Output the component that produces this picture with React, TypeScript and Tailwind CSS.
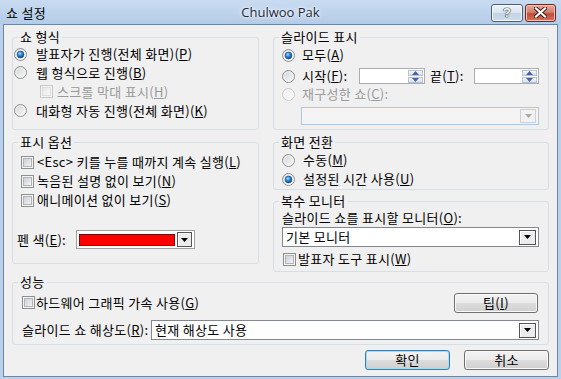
import React, { useId } from "react";

const Radio = ({ checked = false, disabled = false }: { checked?: boolean; disabled?: boolean }) => {
  const id = useId().replace(/:/g, "");
  return (
    <svg width="13" height="13" viewBox="0 0 13 13" className="shrink-0">
      <defs>
        <linearGradient id={`rf${id}`} x1="0" y1="0" x2="1" y2="1">
          <stop offset="0" stopColor={disabled ? "#ebebeb" : "#cfd1d3"} />
          <stop offset="1" stopColor={disabled ? "#fbfbfb" : "#fbfbfb"} />
        </linearGradient>
        <radialGradient id={`rd${id}`} cx="0.4" cy="0.35" r="0.7">
          <stop offset="0" stopColor="#a4e4ff" />
          <stop offset="0.45" stopColor="#2e8ad6" />
          <stop offset="1" stopColor="#0d3a80" />
        </radialGradient>
      </defs>
      <circle cx="6.5" cy="6.5" r="6" fill={`url(#rf${id})`} stroke={disabled ? "#cacaca" : "#8e8f8f"} />
      <circle cx="6.5" cy="6.5" r="4.6" fill="none" stroke="#ffffff" strokeOpacity="0.55" />
      {checked && <circle cx="6.5" cy="6.5" r="3.4" fill={`url(#rd${id})`} stroke="#1b4782" strokeWidth="0.6" />}
    </svg>
  );
};

const Check = ({ disabled = false }: { disabled?: boolean }) => {
  const id = useId().replace(/:/g, "");
  return (
    <svg width="13" height="13" viewBox="0 0 13 13" className="shrink-0">
      <defs>
        <linearGradient id={`cf${id}`} x1="0" y1="0" x2="1" y2="1">
          <stop offset="0" stopColor={disabled ? "#e6e6e6" : "#c9cdd2"} />
          <stop offset="1" stopColor={disabled ? "#fafafa" : "#f6f6f6"} />
        </linearGradient>
      </defs>
      <rect x="0.5" y="0.5" width="12" height="12" fill="#f4f4f4" stroke={disabled ? "#c8c8c8" : "#8e8f8f"} />
      <rect x="2.5" y="2.5" width="8" height="8" fill={`url(#cf${id})`} stroke={disabled ? "#dedede" : "#b1b5ba"} />
    </svg>
  );
};

const Arrow = ({ disabled = false }: { disabled?: boolean }) => (
  <svg width="7" height="4" viewBox="0 0 7 4">
    <path d="M0 0h7L3.5 4z" fill={disabled ? "#a9a9a9" : "#000"} />
  </svg>
);

const DropBtn = ({ disabled = false, cls = "w-[17px] h-[15px]" }: { disabled?: boolean; cls?: string }) => (
  <div
    className={`${cls} shrink-0 border flex items-center justify-center ${
      disabled ? "border-[#c6d2de] bg-[#f1f1f1]" : "border-[#555] bg-[#ececec] shadow-[inset_1px_1px_0_#fff]"
    }`}
  >
    <Arrow disabled={disabled} />
  </div>
);

const Spin = ({ cls }: { cls: string }) => (
  <div className={`${cls} h-[16px] border border-[#abadb3] bg-white flex justify-end p-[1px]`}>
    <div className="w-[15px] flex flex-col gap-[1px]">
      {["M0 4L3.5 0L7 4z", "M0 0h7L3.5 4z"].map((d) => (
        <div
          key={d}
          className="flex-1 border border-[#b7c3d3] bg-[linear-gradient(#f5f7fa,#d9e1ea)] flex items-center justify-center"
        >
          <svg width="7" height="4" viewBox="0 0 7 4">
            <path d={d} fill="#4a62a0" />
          </svg>
        </div>
      ))}
    </div>
  </div>
);

const Combo = ({ text, cls }: { text: string; cls: string }) => (
  <div className={`${cls} h-[20px] border border-[#828790] bg-white flex items-center pl-[3px] pr-[2px]`}>
    <span className="flex-1">{text}</span>
    <DropBtn />
  </div>
);

const Btn = ({ children, cls, def = false }: { children: React.ReactNode; cls: string; def?: boolean }) => (
  <div
    className={`${cls} h-[20px] rounded-[3px] border flex items-center justify-center bg-[linear-gradient(#f2f2f2_0%,#ebebeb_50%,#dddddd_50%,#cfcfcf_100%)] ${
      def ? "border-[#3c7fb1] shadow-[inset_0_0_0_1px_#9fdcfa]" : "border-[#707070] shadow-[inset_0_0_0_1px_#fafafa]"
    }`}
  >
    {children}
  </div>
);

const Box = ({ title, cls, children }: { title: string; cls: string; children: React.ReactNode }) => (
  <fieldset className={`${cls} border border-[#d5dfe5] rounded-[3px] min-w-0`}>
    <legend className="ml-[5px] px-[2px] leading-[14px]">{title}</legend>
    {children}
  </fieldset>
);

export default function App() {
  return (
    <div className="w-[561px] h-[379px] flex flex-col px-[3px] pb-[2px] bg-[#b9d1ea] font-['Noto_Sans_CJK_KR',sans-serif] text-[13px] tracking-[0.3px] leading-[14px] text-black">
      {/* title bar */}
      <div className="-mx-[3px] h-[24px] grid grid-cols-[1fr_auto_1fr] items-center bg-[linear-gradient(#c8dbf1,#b4cbe7)]">
        <span className="pl-[6px] text-[13px] leading-[16px] pt-[2px]">쇼 설정</span>
        <span className="font-['Open_Sans',sans-serif] text-[13px] tracking-normal leading-[16px] text-[#1e2a3a] [text-shadow:0_0_6px_#fff,0_0_3px_#fff]">
          Chulwoo Pak
        </span>
        <div className="flex justify-end gap-[2px] pr-[5px] pt-[1px]">
          <div className="w-[32px] h-[18px] rounded-[3px] border border-[#4e5e74] bg-[linear-gradient(#eef3f9_0%,#d9e4f1_50%,#c2d3e8_50%,#cfdcec_100%)] shadow-[inset_0_0_0_1px_#f4f8fc] flex items-center justify-center">
            <span className="font-['Liberation_Sans',sans-serif] text-[13px] font-bold leading-[14px] text-[#fff] [text-shadow:0_0_1px_#233,0_0_1px_#233,0_0_1px_#233]">
              ?
            </span>
          </div>
          <div className="w-[31px] h-[18px] rounded-[3px] border border-[#6b2a20] bg-[linear-gradient(#e9a99b_0%,#d47f6e_45%,#c24a36_55%,#d2735e_100%)] shadow-[inset_0_0_0_1px_#eec3b8] flex items-center justify-center">
            <svg width="13" height="11" viewBox="0 0 13 11">
              <path d="M2 1.5L11 9.5M11 1.5L2 9.5" stroke="#3c1a14" strokeWidth="4" strokeLinecap="square" />
              <path d="M2 1.5L11 9.5M11 1.5L2 9.5" stroke="#fff" strokeWidth="2.2" strokeLinecap="square" />
            </svg>
          </div>
        </div>
      </div>

      {/* client area */}
      <div className="flex-1 border border-[#6f86a3] bg-[#f0f0f0] px-[8px] pt-[5px] flex flex-col">
        {/* row 1 */}
        <div className="flex gap-[14px]">
          <Box title="쇼 형식" cls="w-[247px] h-[100px]">
            <div className="pt-[1px] pl-[1px] flex flex-col">
              <div className="h-[18px] flex items-center gap-[9px]">
                <Radio checked />
                <span>발표자가 진행(전체 화면)(<u>P</u>)</span>
              </div>
              <div className="h-[19px] flex items-center gap-[9px]">
                <Radio />
                <span>웹 형식으로 진행(<u>B</u>)</span>
              </div>
              <div className="h-[19px] flex items-center gap-[4px] pl-[26px]">
                <Check disabled />
                <span className="text-[#9a9a9a]">스크롤 막대 표시(<u>H</u>)</span>
              </div>
              <div className="h-[19px] flex items-center gap-[9px]">
                <Radio />
                <span>대화형 자동 진행(전체 화면)(<u>K</u>)</span>
              </div>
            </div>
          </Box>

          <Box title="슬라이드 표시" cls="w-[276px] h-[100px]">
            <div className="pl-[8px] flex flex-col">
              <div className="mt-[2px] h-[18px] flex items-center gap-[7px]">
                <Radio checked />
                <span>모두(<u>A</u>)</span>
              </div>
              <div className="mt-[2px] h-[20px] flex items-center">
                <Radio />
                <span className="ml-[7px] w-[57px]">시작(<u>F</u>):</span>
                <Spin cls="w-[66px]" />
                <span className="ml-[5px] w-[44px]">끝(<u>T</u>):</span>
                <Spin cls="w-[65px]" />
              </div>
              <div className="h-[16px] flex items-center gap-[7px]">
                <Radio disabled />
                <span className="text-[#9a9a9a]">재구성한 쇼(<u>C</u>):</span>
              </div>
              <div className="mt-[5px] ml-[19px] w-[238px] h-[18px] border border-[#b5c6d8] bg-[#f4f4f4] flex items-center justify-end pr-[2px]">
                <DropBtn disabled cls="w-[16px] h-[14px]" />
              </div>
            </div>
          </Box>
        </div>

        {/* row 2 */}
        <div className="mt-[5px] flex items-start gap-[14px]">
          <Box title="표시 옵션" cls="w-[247px] h-[129px]">
            <div className="pt-[4px] flex flex-col gap-[1px]">
              <div className="h-[18px] flex items-center gap-[3px] pl-[8px]">
                <Check />
                <span>&lt;Esc&gt; 키를 누를 때까지 계속 실행(<u>L</u>)</span>
              </div>
              <div className="h-[18px] flex items-center gap-[3px] pl-[8px]">
                <Check />
                <span>녹음된 설명 없이 보기(<u>N</u>)</span>
              </div>
              <div className="h-[18px] flex items-center gap-[3px] pl-[8px]">
                <Check />
                <span>애니메이션 없이 보기(<u>S</u>)</span>
              </div>
              <div className="mt-[20px] flex items-center pl-[4px]">
                <span className="w-[59px]">펜 색(<u>E</u>):</span>
                <div className="w-[119px] h-[19px] border border-[#a0a0a0] bg-white flex items-center gap-[2px] px-[2px]">
                  <div className="flex-1 h-[12px] bg-[#ff0000] border border-[#8b0000]" />
                  <DropBtn cls="w-[15px] h-[15px]" />
                </div>
              </div>
            </div>
          </Box>

          <div className="w-[276px] flex flex-col gap-[4px]">
            <Box title="화면 전환" cls="w-[276px] h-[55px]">
              <div className="pt-[2px] pl-[8px] flex flex-col gap-[1px]">
                <div className="h-[18px] flex items-center gap-[8px]">
                  <Radio />
                  <span>수동(<u>M</u>)</span>
                </div>
                <div className="h-[18px] flex items-center gap-[8px]">
                  <Radio checked />
                  <span>설정된 시간 사용(<u>U</u>)</span>
                </div>
              </div>
            </Box>
            <Box title="복수 모니터" cls="w-[276px] h-[78px]">
              <div className="pt-[1px] pl-[8px] flex flex-col">
                <div className="h-[18px] flex items-center">
                  슬라이드 쇼를 표시할 모니터(<u>O</u>):
                </div>
                <Combo text="기본 모니터" cls="w-[257px]" />
                <div className="mt-[3px] h-[18px] flex items-center gap-[2px] pl-[1px]">
                  <Check />
                  <span>발표자 도구 표시(<u>W</u>)</span>
                </div>
              </div>
            </Box>
          </div>
        </div>

        {/* row 3 */}
        <Box title="성능" cls="mt-[3px] w-[537px] h-[70px]">
          <div className="pt-[4px] pl-[9px] pr-[9px] flex flex-col">
            <div className="h-[19px] flex items-center justify-between">
              <div className="flex items-center gap-[1px]">
                <Check />
                <span>하드웨어 그래픽 가속 사용(<u>G</u>)</span>
              </div>
              <Btn cls="w-[84px] mr-[1px] h-[19px]">
                팁(<u>I</u>)
              </Btn>
            </div>
            <div className="mt-[8px] flex items-center">
              <span className="w-[129px]">슬라이드 쇼 해상도(<u>R</u>):</span>
              <Combo text="현재 해상도 사용" cls="flex-1" />
            </div>
          </div>
        </Box>

        {/* buttons */}
        <div className="mt-[5px] flex justify-end gap-[14px]">
          <Btn cls="w-[85px]" def>
            확인
          </Btn>
          <Btn cls="w-[85px]">취소</Btn>
        </div>
      </div>
    </div>
  );
}
